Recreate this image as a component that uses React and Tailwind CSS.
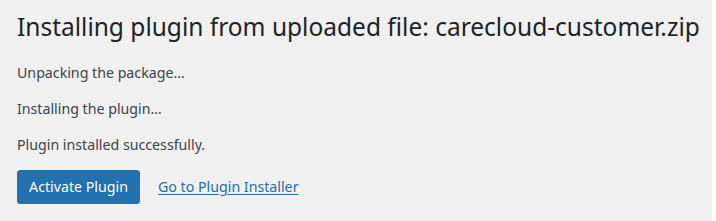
import React from 'react'

const App = () => {
    const font = { fontFamily: '"Segoe UI", "Noto Sans", sans-serif' }

    return (
        <div className="flex w-[716px] h-[221px] bg-white" style={font}>
            <div className="w-[712px] h-full bg-[#f0f0f1] pl-[17px]">
                <h1 className="pt-[10px] text-[24.5px] leading-[34px] font-normal text-[#1d2327] whitespace-nowrap">
                    Installing plugin from uploaded file: carecloud-customer.zip
                </h1>
                <p className="mt-[18px] text-[14.2px] leading-[21px] text-[#3c434a]">Unpacking the package…</p>
                <p className="mt-[15px] text-[14.2px] leading-[21px] text-[#3c434a]">Installing the plugin…</p>
                <p className="mt-[15px] text-[14.2px] leading-[21px] text-[#3c434a]">Plugin installed successfully.</p>
                <div className="mt-[15px] flex items-center">
                    <button className="h-[34px] w-[123px] rounded-[3px] border border-[#2271b1] bg-[#2271b1] text-[14.2px] text-white">
                        Activate Plugin
                    </button>
                    <a href="#" className="ml-[18px] text-[14.2px] text-[#2271b1] underline underline-offset-[2px]">
                        Go to Plugin Installer
                    </a>
                </div>
            </div>
            <div className="flex-1" />
        </div>
    )
}

export default App
